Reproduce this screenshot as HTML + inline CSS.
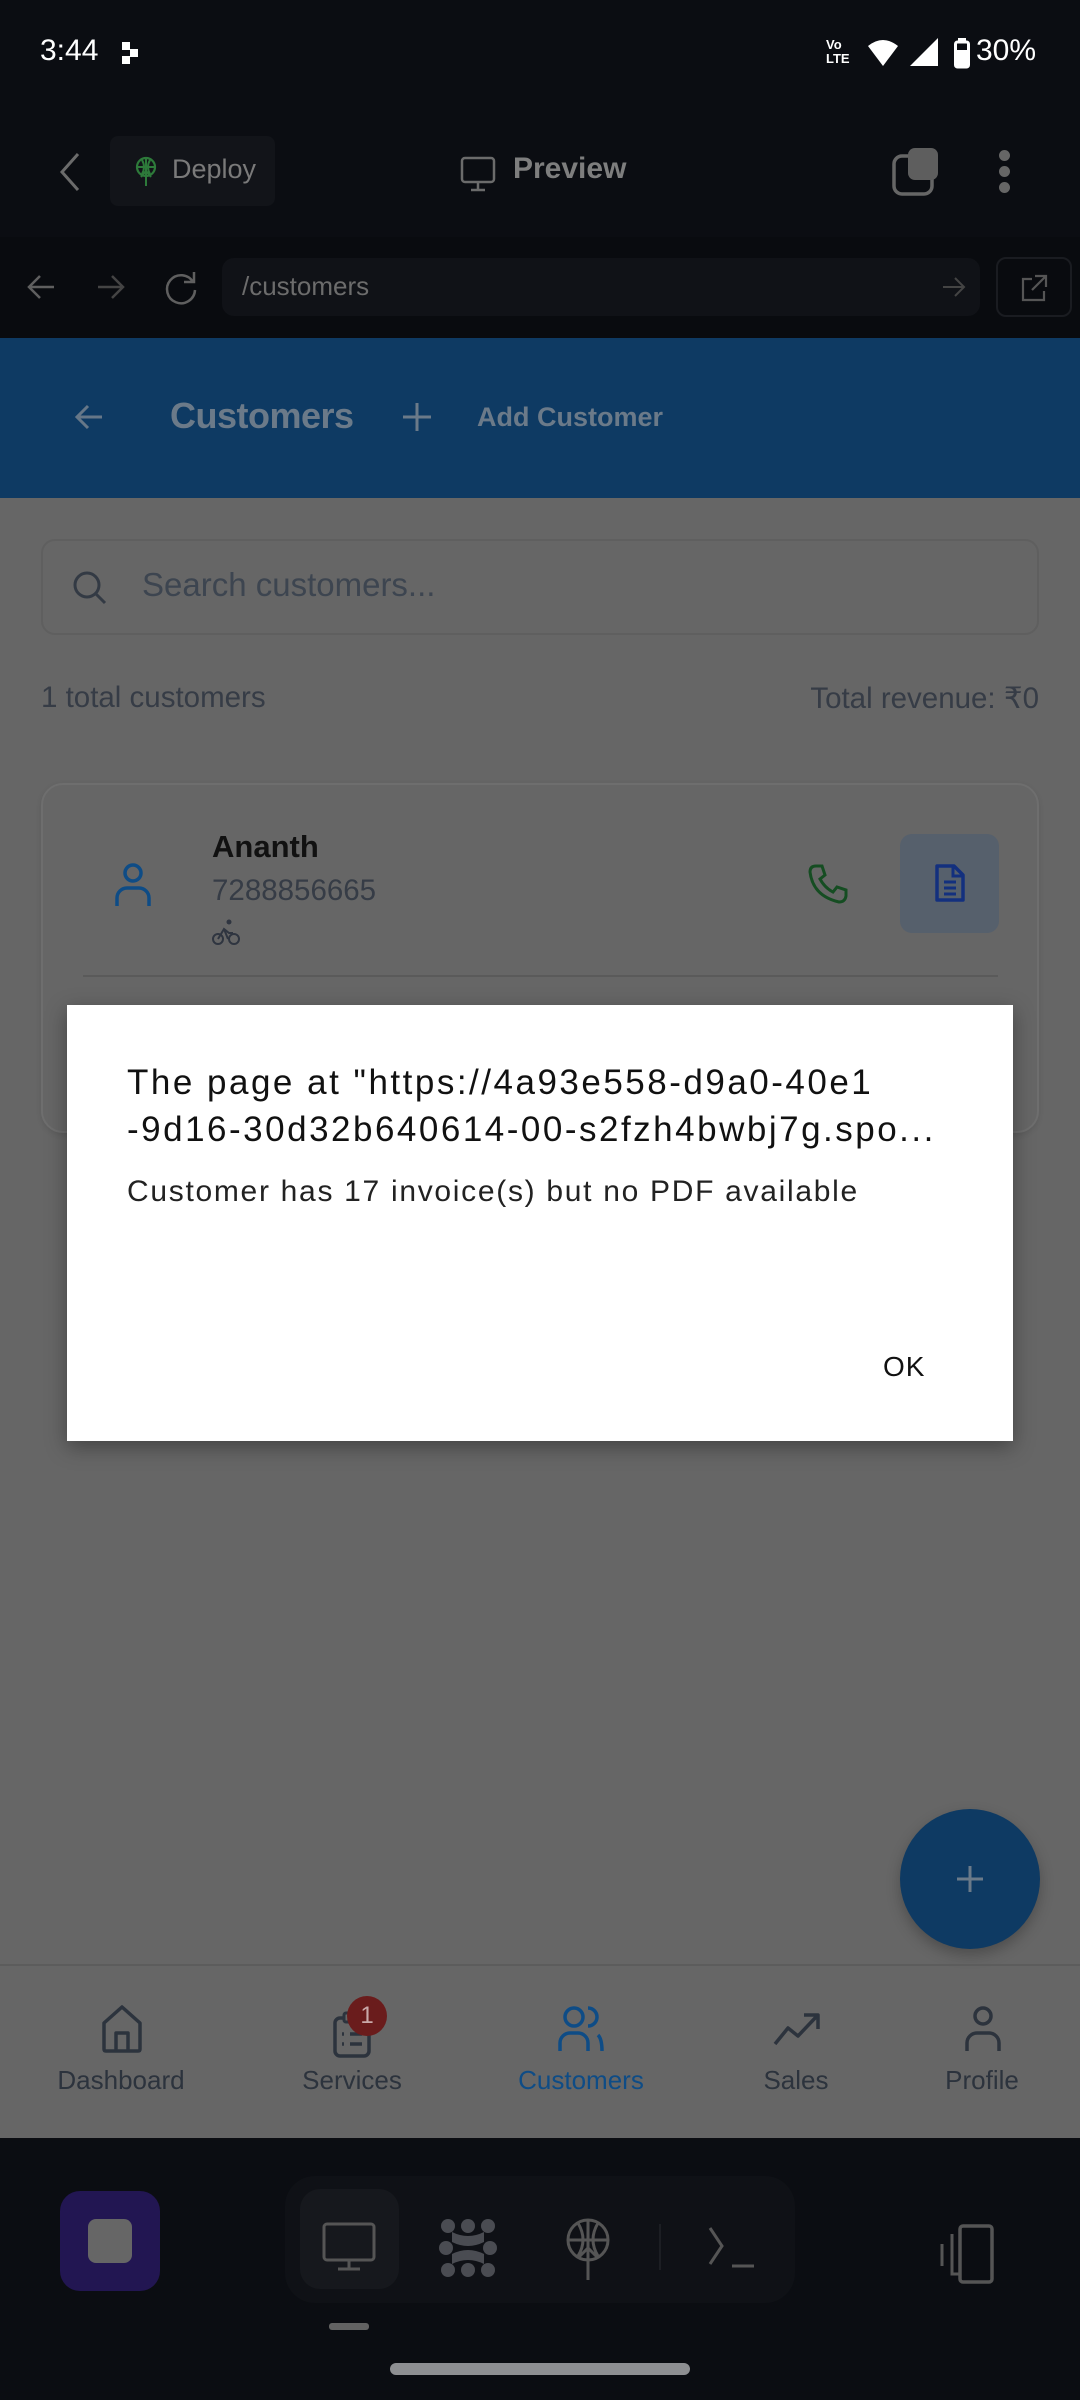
<!DOCTYPE html>
<html><head><meta charset="utf-8"><style>
*{margin:0;padding:0;box-sizing:border-box}
body{width:1080px;height:2400px;position:relative;overflow:hidden;background:#666;font-family:"Liberation Sans",sans-serif}
.a{position:absolute}
svg{position:absolute;overflow:visible}
</style></head><body>
<!-- top dark -->
<div class="a" style="left:0;top:0;width:1080px;height:237px;background:#0b0d12"></div>
<div class="a" style="left:0;top:237px;width:1080px;height:101px;background:#090b0f"></div>
<div class="a" style="left:40px;top:34px;color:#fff;font-size:30px">3:44</div>
<svg style="left:122px;top:42px" width="18" height="22"><rect x="0" y="0" width="8" height="8" fill="#fff"/><rect x="8" y="7" width="8" height="8" fill="#fff"/><rect x="0" y="14" width="8" height="8" fill="#fff"/></svg>
<div class="a" style="left:826px;top:38px;color:#fff;font-size:13px;line-height:14px;font-weight:bold">Vo<br>LTE</div>
<svg style="left:868px;top:38px" width="30" height="28"><path d="M0 8 Q15 -4 30 8 L15 28Z" fill="#fff"/></svg>
<svg style="left:910px;top:38px" width="28" height="28"><path d="M28 0 V28 H0Z" fill="#fff"/></svg>
<svg style="left:954px;top:38px" width="16" height="30"><rect x="4" y="0" width="8" height="4" fill="#fff"/><rect x="1.5" y="4" width="13" height="25" rx="2" fill="none" stroke="#fff" stroke-width="3"/><rect x="3" y="12" width="10" height="16" fill="#fff"/></svg>
<div class="a" style="left:976px;top:34px;color:#fff;font-size:30px">30%</div>

<svg style="left:58px;top:152px" width="24" height="40"><path d="M20 2 L4 20 L20 38" fill="none" stroke="#6b6b6b" stroke-width="3"/></svg>
<div class="a" style="left:110px;top:136px;width:165px;height:70px;background:#121419;border-radius:8px"></div>
<svg style="left:134px;top:157px" width="24" height="30"><circle cx="12" cy="10" r="9" fill="none" stroke="#2d7a3a" stroke-width="2.2"/><path d="M3 10H21M12 1V29M7 20L12 14L17 20M8 3Q12 10 8 17M16 3Q12 10 16 17" fill="none" stroke="#2d7a3a" stroke-width="2"/></svg>
<div class="a" style="left:172px;top:154px;color:#7a7a7a;font-size:27px">Deploy</div>
<svg style="left:460px;top:156px" width="36" height="36"><rect x="2" y="2" width="32" height="24" rx="3" fill="none" stroke="#6b6b6b" stroke-width="2.5"/><path d="M18 26V33M11 34H25" stroke="#6b6b6b" stroke-width="2.5"/></svg>
<div class="a" style="left:513px;top:152px;color:#7e7e7e;font-size:30px;font-weight:bold">Preview</div>
<svg style="left:892px;top:146px" width="50" height="50"><rect x="2" y="10" width="38" height="38" rx="8" fill="none" stroke="#666" stroke-width="3.5"/><rect x="16" y="2" width="30" height="32" rx="7" fill="#5e5e5e"/></svg>
<div class="a" style="left:999px;top:150px;width:11px;height:11px;border-radius:50%;background:#666"></div>
<div class="a" style="left:999px;top:166px;width:11px;height:11px;border-radius:50%;background:#666"></div>
<div class="a" style="left:999px;top:182px;width:11px;height:11px;border-radius:50%;background:#666"></div>

<svg style="left:26px;top:273px" width="30" height="28"><path d="M28 14H3M14 3L3 14L14 25" fill="none" stroke="#5f5f5f" stroke-width="2.5"/></svg>
<svg style="left:96px;top:273px" width="30" height="28"><path d="M2 14H27M16 3L27 14L16 25" fill="none" stroke="#444" stroke-width="2.5"/></svg>
<svg style="left:163px;top:270px" width="36" height="36"><path d="M30 12A14 14 0 1 0 32 20M31 2V12H21" fill="none" stroke="#5f5f5f" stroke-width="2.5"/></svg>
<div class="a" style="left:222px;top:258px;width:758px;height:58px;background:#101217;border-radius:12px"></div>
<div class="a" style="left:242px;top:271px;color:#6c6c6c;font-size:26px">/customers</div>
<svg style="left:942px;top:276px" width="24" height="22"><path d="M1 11H22M13 2L22 11L13 20" fill="none" stroke="#444" stroke-width="2"/></svg>
<div class="a" style="left:996px;top:257px;width:76px;height:60px;border:2px solid #1a1c21;border-radius:10px"></div>
<svg style="left:1020px;top:274px" width="28" height="28"><path d="M12 5H3V26H24V17M15 2H26V13M26 2L12 16" fill="none" stroke="#555" stroke-width="2.2"/></svg>

<!-- blue header -->
<div class="a" style="left:0;top:338px;width:1080px;height:160px;background:#0e3a63"></div>
<svg style="left:74px;top:403px" width="30" height="28"><path d="M28 14H3M14 3L3 14L14 25" fill="none" stroke="#667788" stroke-width="3"/></svg>
<div class="a" style="left:170px;top:395px;color:#6b7a89;font-size:36px;font-weight:bold;letter-spacing:-0.5px">Customers</div>
<svg style="left:402px;top:402px" width="30" height="30"><path d="M15 1V29M1 15H29" stroke="#6b7a89" stroke-width="3"/></svg>
<div class="a" style="left:477px;top:402px;color:#6b7a89;font-size:27px;font-weight:bold">Add Customer</div>

<!-- content -->
<div class="a" style="left:41px;top:539px;width:998px;height:96px;border:2px solid #5f5f5f;border-radius:14px"></div>
<svg style="left:72px;top:570px" width="36" height="36"><circle cx="15" cy="15" r="12" fill="none" stroke="#333a44" stroke-width="3"/><path d="M24 24L33 33" stroke="#333a44" stroke-width="3"/></svg>
<div class="a" style="left:142px;top:566px;color:#3d4550;font-size:33px">Search customers...</div>
<div class="a" style="left:41px;top:681px;color:#363c46;font-size:29.5px">1 total customers</div>
<div class="a" style="right:41px;top:681px;color:#363c46;font-size:29.5px">Total revenue: ₹0</div>

<div class="a" style="left:41px;top:783px;width:998px;height:350px;border:2px solid #6e6e6e;border-radius:22px;box-shadow:0 2px 6px rgba(0,0,0,.1)"></div>
<svg style="left:114px;top:862px" width="38" height="44"><circle cx="19" cy="11" r="8" fill="none" stroke="#0e4c86" stroke-width="3.5"/><path d="M3 44V36A10 10 0 0 1 13 26H25A10 10 0 0 1 35 36V44" fill="none" stroke="#0e4c86" stroke-width="3.5"/></svg>
<div class="a" style="left:212px;top:829px;color:#111;font-size:31px;font-weight:bold">Ananth</div>
<div class="a" style="left:212px;top:874px;color:#363c46;font-size:29.5px">7288856665</div>
<svg style="left:212px;top:918px" width="28" height="28"><circle cx="6" cy="21" r="5" fill="none" stroke="#2f3540" stroke-width="2"/><circle cx="22" cy="21" r="5" fill="none" stroke="#2f3540" stroke-width="2"/><circle cx="17" cy="4" r="2.5" fill="#2f3540"/><path d="M6 21L12 11L17 15H21M12 11L16 21" fill="none" stroke="#2f3540" stroke-width="2"/></svg>
<svg style="left:808px;top:864px" width="40" height="40"><path d="M8 2L14 2L17 11L12 15Q17 24 25 28L29 23L38 26V32Q37 38 31 38Q5 32 2 8Q2 2 8 2Z" fill="none" stroke="#154d22" stroke-width="3"/></svg>
<div class="a" style="left:900px;top:834px;width:99px;height:99px;background:#56606c;border-radius:12px"></div>
<svg style="left:934px;top:863px" width="32" height="40"><path d="M3 3H20L29 12V37H3Z" fill="none" stroke="#13307e" stroke-width="3.5" stroke-linejoin="round"/><path d="M19 3V13H29M10 19H22M10 25H22M10 31H22" fill="none" stroke="#13307e" stroke-width="3"/></svg>
<div class="a" style="left:83px;top:975px;width:915px;height:2px;background:#5a5a5a"></div>

<!-- dialog -->
<div class="a" style="left:67px;top:1005px;width:946px;height:436px;background:#fff;box-shadow:0 6px 20px rgba(0,0,0,.35)">
<div class="a" style="left:60px;top:54px;color:#111;font-size:35px;line-height:47px;white-space:nowrap;letter-spacing:2.5px">The page at "https://4a93e558-d9a0-40e1<br>-9d16-30d32b640614-00-s2fzh4bwbj7g.spo...</div>
<div class="a" style="left:60px;top:170px;color:#222;font-size:30px;white-space:nowrap;letter-spacing:1.7px">Customer has 17 invoice(s) but no PDF available</div>
<div class="a" style="left:816px;top:346px;color:#111;font-size:28px;letter-spacing:1px">OK</div>
</div>

<!-- FAB -->
<div class="a" style="left:900px;top:1809px;width:140px;height:140px;border-radius:50%;background:#0e3a63;box-shadow:0 6px 14px rgba(0,0,0,.25)"></div>
<svg style="left:956px;top:1865px" width="28" height="28"><path d="M14 1V27M1 14H27" stroke="#6b7a89" stroke-width="3"/></svg>

<!-- bottom nav -->
<div class="a" style="left:0;top:1964px;width:1080px;height:2px;background:#5c5c5c"></div>
<svg style="left:101px;top:2005px" width="42" height="48"><path d="M3 18L21 2L39 18V44Q39 46 37 46H5Q3 46 3 44Z M15 46V28H27V46" fill="none" stroke="#2c333d" stroke-width="3.5" stroke-linejoin="round"/></svg>
<svg style="left:332px;top:2010px" width="40" height="48"><rect x="3" y="8" width="34" height="38" rx="5" fill="none" stroke="#2c333d" stroke-width="3.5"/><rect x="12" y="3" width="16" height="9" rx="2" fill="#666" stroke="#2c333d" stroke-width="3"/><path d="M10 24H12M18 24H30M10 34H12M18 34H30" stroke="#2c333d" stroke-width="3.5"/></svg>
<div class="a" style="left:347px;top:1996px;width:40px;height:40px;border-radius:50%;background:#6a1c1c;color:#c9a9a9;font-size:24px;text-align:center;line-height:40px">1</div>
<svg style="left:558px;top:2005px" width="48" height="48"><circle cx="16" cy="12" r="9" fill="none" stroke="#0e4c86" stroke-width="3.5"/><path d="M2 46V38A10 10 0 0 1 12 28H20A10 10 0 0 1 30 38V46M30 3A9 9 0 0 1 30 21M40 30Q44 34 44 46" fill="none" stroke="#0e4c86" stroke-width="3.5"/></svg>
<svg style="left:772px;top:2012px" width="50" height="36"><path d="M3 32L16 16L26 24L45 4M32 3H46V17" fill="none" stroke="#2c333d" stroke-width="3.5" stroke-linejoin="round"/></svg>
<svg style="left:964px;top:2005px" width="38" height="48"><circle cx="19" cy="11" r="8" fill="none" stroke="#2c333d" stroke-width="3.5"/><path d="M3 46V38A10 10 0 0 1 13 28H25A10 10 0 0 1 35 38V46" fill="none" stroke="#2c333d" stroke-width="3.5"/></svg>
<div class="a" style="left:21px;top:2065px;width:200px;text-align:center;color:#2c333d;font-size:26px">Dashboard</div>
<div class="a" style="left:252px;top:2065px;width:200px;text-align:center;color:#2c333d;font-size:26px">Services</div>
<div class="a" style="left:481px;top:2065px;width:200px;text-align:center;color:#0e4c86;font-size:26px">Customers</div>
<div class="a" style="left:696px;top:2065px;width:200px;text-align:center;color:#2c333d;font-size:26px">Sales</div>
<div class="a" style="left:882px;top:2065px;width:200px;text-align:center;color:#2c333d;font-size:26px">Profile</div>

<!-- bottom dark -->
<div class="a" style="left:0;top:2138px;width:1080px;height:262px;background:#0b0d12"></div>
<div class="a" style="left:60px;top:2191px;width:100px;height:100px;border-radius:20px;background:#221652"></div>
<div class="a" style="left:88px;top:2219px;width:44px;height:44px;border-radius:8px;background:#666"></div>
<div class="a" style="left:285px;top:2176px;width:510px;height:127px;border-radius:30px;background:#0f1116"></div>
<div class="a" style="left:300px;top:2189px;width:99px;height:100px;border-radius:20px;background:#16181d"></div>
<svg style="left:322px;top:2222px" width="54" height="50"><rect x="2" y="2" width="50" height="36" rx="3" fill="none" stroke="#555" stroke-width="3"/><path d="M27 38V46M16 47H38" stroke="#555" stroke-width="3"/></svg>
<svg style="left:438px;top:2218px" width="62" height="62" fill="#4a4c52"><circle cx="10" cy="8" r="7"/><circle cx="30" cy="8" r="7"/><circle cx="50" cy="8" r="7"/><circle cx="8" cy="30" r="7"/><circle cx="52" cy="30" r="7"/><circle cx="10" cy="52" r="7"/><circle cx="30" cy="52" r="7"/><circle cx="50" cy="52" r="7"/><path d="M14 14Q30 22 46 14L46 24Q30 32 14 24Z M14 36Q30 28 46 36L46 46Q30 38 14 46Z"/></svg>
<svg style="left:564px;top:2218px" width="48" height="64"><circle cx="24" cy="22" r="20" fill="none" stroke="#555" stroke-width="3"/><path d="M4 22H44M24 2V62M14 40L24 30L34 40M14 5Q24 22 14 38M34 5Q24 22 34 38" fill="none" stroke="#555" stroke-width="3"/></svg>
<div class="a" style="left:659px;top:2224px;width:2px;height:46px;background:#1c1e23"></div>
<svg style="left:708px;top:2226px" width="48" height="44"><path d="M2 2L14 20L2 38M24 40H46" fill="none" stroke="#555" stroke-width="3"/></svg>
<svg style="left:940px;top:2224px" width="60" height="60"><rect x="20" y="2" width="32" height="56" rx="3" fill="none" stroke="#555" stroke-width="3.5"/><path d="M12 10V50H20M2 20V42" fill="none" stroke="#555" stroke-width="3"/></svg>
<div class="a" style="left:329px;top:2323px;width:40px;height:7px;border-radius:3px;background:#626262"></div>
<div class="a" style="left:390px;top:2363px;width:300px;height:12px;border-radius:6px;background:#8e8f92"></div>
</body></html>
